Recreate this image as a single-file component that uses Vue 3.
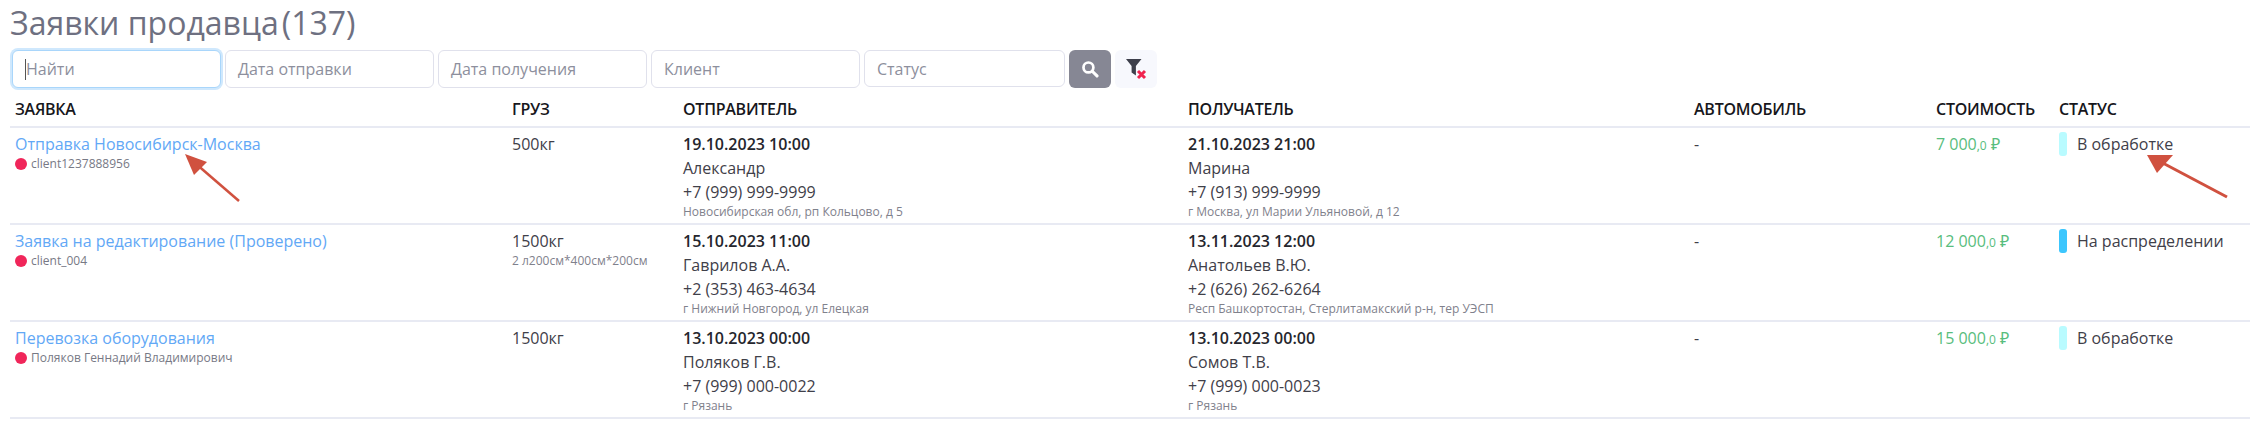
<template>
  <div class="page">
    <h1 class="title">Заявки продавца<span class="count">(137)</span></h1>

    <div class="filters">
      <div class="field focused"><span class="caret"></span>Найти</div>
      <div class="field">Дата отправки</div>
      <div class="field">Дата получения</div>
      <div class="field">Клиент</div>
      <div class="field status">Статус</div>
      <button class="btn-search" aria-label="Поиск">
        <svg width="18" height="18" viewBox="0 0 16 16">
          <circle cx="6.6" cy="6.6" r="4.4" fill="none" stroke="#fff" stroke-width="2.4" />
          <path d="M10 10l4.2 4.2" stroke="#fff" stroke-width="2.8" stroke-linecap="round" />
        </svg>
      </button>
      <button class="btn-clear" aria-label="Сбросить">
        <svg width="26" height="26" viewBox="0 0 26 26">
          <path d="M3 3h15.5l-5.6 7v9.5l-4.300-3v-6.500z" fill="#3d3f4b" />
          <path d="M15 15l7 7M22 15l-7 7" stroke="#f0234f" stroke-width="3" />
        </svg>
      </button>
    </div>

    <table class="orders">
      <colgroup>
        <col v-for="w in colWidths" :key="w" :style="{ width: w + 'px' }" />
      </colgroup>
      <thead>
        <tr>
          <th>Заявка</th>
          <th>Груз</th>
          <th>Отправитель</th>
          <th>Получатель</th>
          <th>Автомобиль</th>
          <th>Стоимость</th>
          <th>Статус</th>
        </tr>
      </thead>
      <tbody>
        <tr v-for="o in orders" :key="o.name">
          <td>
            <a class="link">{{ o.name }}</a>
            <div class="client"><i class="dot"></i>{{ o.client }}</div>
          </td>
          <td>
            <div>{{ o.weight }}</div>
            <div v-if="o.size" class="small">{{ o.size }}</div>
          </td>
          <td v-for="p in [o.from, o.to]" :key="p.date">
            <div class="date">{{ p.date }}</div>
            <div class="line">{{ p.person }}</div>
            <div class="line">{{ p.phone }}</div>
            <div class="small">{{ p.addr }}</div>
          </td>
          <td>-</td>
          <td class="price">{{ o.price }}<small>,0</small> ₽</td>
          <td>
            <div class="state">
              <i class="bar" :class="o.barClass"></i>{{ o.status }}
            </div>
          </td>
        </tr>
      </tbody>
    </table>

    <svg class="arrow arrow-one" width="70" height="60" viewBox="0 0 70 60">
      <path d="M58 50L14 12" stroke="#d0513f" stroke-width="2.500" />
      <path d="M4 3l22 8-13 13z" fill="#d0513f" />
    </svg>
    <svg class="arrow arrow-two" width="100" height="60" viewBox="0 0 100 60">
      <path d="M90 50L22 14" stroke="#d0513f" stroke-width="3" />
      <path d="M10 8h26l-16 18z" fill="#d0513f" />
    </svg>
  </div>
</template>

<script setup>
const colWidths = [497, 171, 505, 506, 242, 123, 196];

const orders = [
  {
    name: "Отправка Новосибирск-Москва",
    client: "client1237888956",
    weight: "500кг",
    from: {
      date: "19.10.2023 10:00",
      person: "Александр",
      phone: "+7 (999) 999-9999",
      addr: "Новосибирская обл, рп Кольцово, д 5",
    },
    to: {
      date: "21.10.2023 21:00",
      person: "Марина",
      phone: "+7 (913) 999-9999",
      addr: "г Москва, ул Марии Ульяновой, д 12",
    },
    price: "7 000",
    status: "В обработке",
    barClass: "light",
  },
  {
    name: "Заявка на редактирование (Проверено)",
    client: "client_004",
    weight: "1500кг",
    size: "2 л200см*400см*200см",
    from: {
      date: "15.10.2023 11:00",
      person: "Гаврилов А.А.",
      phone: "+2 (353) 463-4634",
      addr: "г Нижний Новгород, ул Елецкая",
    },
    to: {
      date: "13.11.2023 12:00",
      person: "Анатольев В.Ю.",
      phone: "+2 (626) 262-6264",
      addr: "Респ Башкортостан, Стерлитамакский р-н, тер УЭСП",
    },
    price: "12 000",
    status: "На распределении",
    barClass: "blue",
  },
  {
    name: "Перевозка оборудования",
    client: "Поляков Геннадий Владимирович",
    weight: "1500кг",
    from: {
      date: "13.10.2023 00:00",
      person: "Поляков Г.В.",
      phone: "+7 (999) 000-0022",
      addr: "г Рязань",
    },
    to: {
      date: "13.10.2023 00:00 ",
      person: "Сомов Т.В.",
      phone: "+7 (999) 000-0023",
      addr: "г Рязань",
    },
    price: "15 000",
    status: "В обработке",
    barClass: "light",
  },
];
</script>

<style scoped>
.page {
  position: relative;
  height: 422px;
  padding: 0 11px 0 10px;
  box-sizing: border-box;
  overflow: hidden;
  background: #fff;
  font-family: "Open Sans", "Noto Sans", sans-serif;
  font-size: 16px;
  color: #3f4049;
}

.title {
  margin: 0;
  height: 50px;
  font-size: 32px;
  line-height: 46px;
  font-weight: 400;
  color: #6e7081;
}

.count {
  margin-left: 3px;
}

.filters {
  display: flex;
  align-items: flex-start;
  gap: 4px;
  height: 38px;
  margin-left: 2px;
}

.field {
  box-sizing: border-box;
  display: flex;
  align-items: center;
  width: 209px;
  height: 38px;
  padding: 0 12px;
  border: 1px solid #e0e1ec;
  border-radius: 6px;
  color: #8d8f9d;
  background: #fff;
}

.field.focused {
  border-color: #a9d6fb;
  box-shadow: 0 0 0 2px #cfe8fd;
}

.field.status {
  width: 201px;
  height: 37px;
}

.caret {
  width: 1px;
  height: 21px;
  background: #555;
}

button {
  display: flex;
  align-items: center;
  justify-content: center;
  width: 42px;
  height: 38px;
  padding: 0;
  border: 0;
  border-radius: 6px;
}

.btn-search {
  background: #868794;
}

.btn-clear {
  background: #f7f8fd;
}

.orders {
  width: 2240px;
  margin-top: 2px;
  border-collapse: collapse;
  table-layout: fixed;
}

th {
  height: 34px;
  padding: 2px 5px 0;
  text-align: left;
  font-size: 16px;
  font-weight: 600;
  letter-spacing: -0.25px;
  text-transform: uppercase;
  color: #17171c;
  border-bottom: 2px solid #e8eaf3;
}

td {
  height: 97px;
  box-sizing: border-box;
  padding: 4px 5px 0;
  vertical-align: top;
  line-height: 24px;
  border-bottom: 2px solid #e8eaf3;
}

.link {
  color: #62a8f6;
}

.client {
  display: flex;
  align-items: center;
  font-size: 12px;
  line-height: 16px;
  color: #777985;
}

.dot {
  width: 12px;
  height: 12px;
  margin-right: 4px;
  border-radius: 50%;
  background: #f0265a;
}

.small {
  font-size: 12px;
  line-height: 16px;
  color: #7f818c;
}

.date {
  font-weight: 600;
  color: #25262d;
}

.price {
  color: #58bd7d;
}

.price small {
  font-size: 12px;
}

.state {
  display: flex;
  align-items: center;
}

.bar {
  width: 8px;
  height: 24px;
  margin-right: 10px;
  border-radius: 3px;
}

.bar.light {
  background: #b9fbff;
}

.bar.blue {
  background: #3cc6fd;
}

.arrow {
  position: absolute;
}

.arrow-one {
  left: 181px;
  top: 151px;
}

.arrow-two {
  left: 2137px;
  top: 147px;
}
</style>
